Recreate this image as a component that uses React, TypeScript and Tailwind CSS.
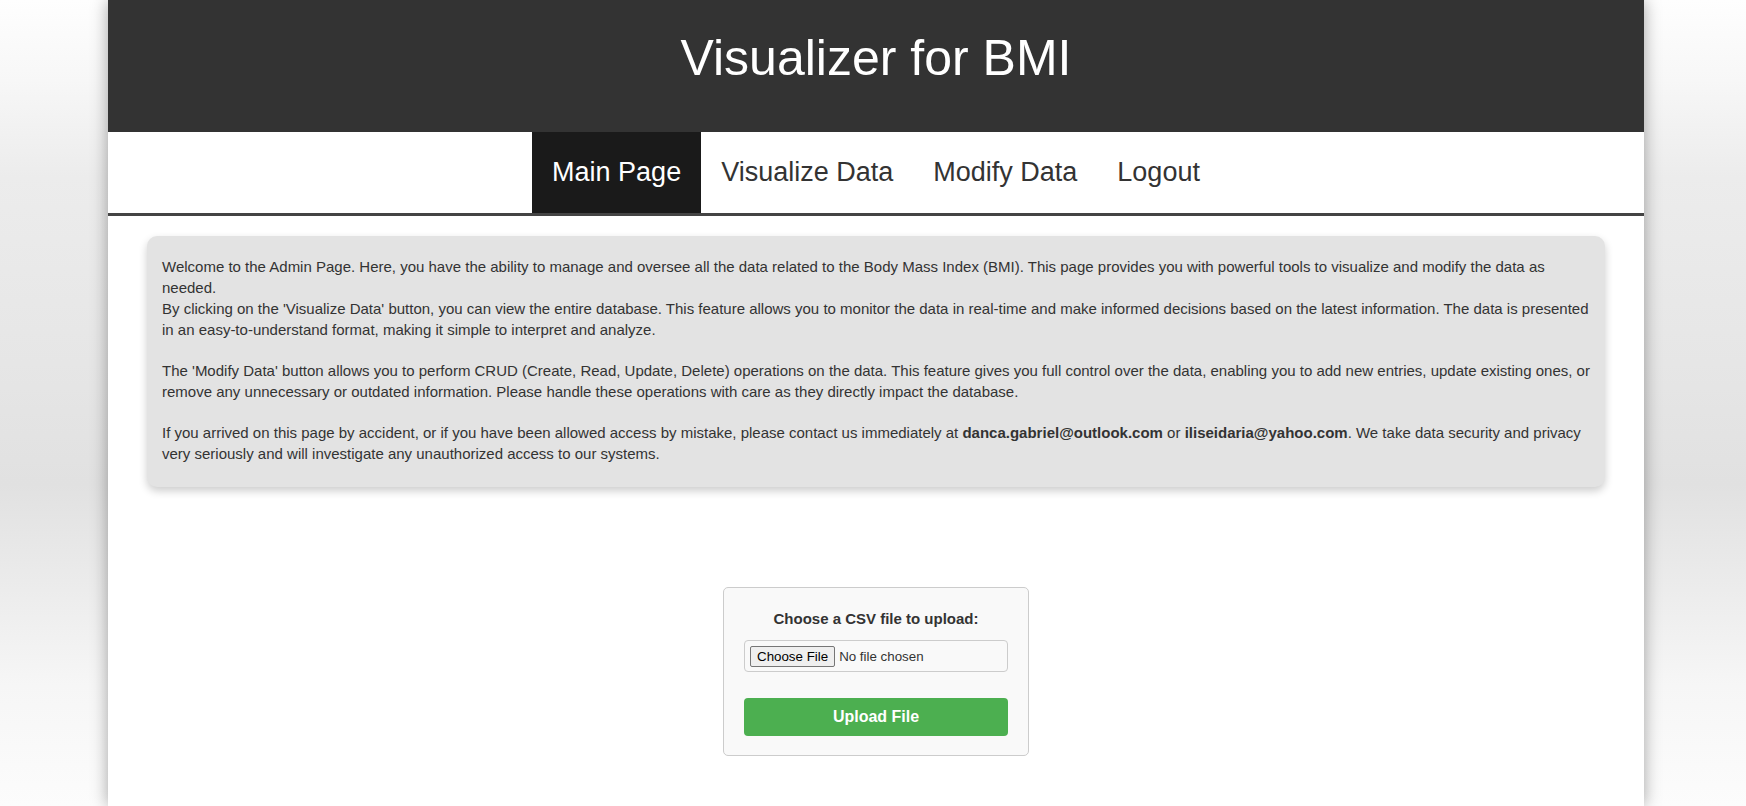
export default function App() {
  const navItems = ['Main Page', 'Visualize Data', 'Modify Data', 'Logout'];

  return (
    <div className="min-h-screen w-full overflow-hidden bg-[linear-gradient(180deg,#fefefe_0%,#f7f7f7_10%,#ececec_22%,#e6e6e6_45%,#e1e1e1_60%,#ebebeb_72%,#f6f6f6_85%,#fcfcfc_100%)] font-['Liberation_Sans',Arial,sans-serif]">
      <div className="ml-[108px] w-[1536px] min-h-[806px] bg-white shadow-[0_0_16px_rgba(0,0,0,0.35)]">
        {/* Header */}
        <div className="h-[132px] bg-[#333333] pt-[33px] text-center">
          <h1 className="text-[50px] leading-none font-normal text-white">Visualizer for BMI</h1>
        </div>

        {/* Navigation */}
        <nav className="flex h-[84px] justify-center border-b-[3px] border-[#444444]">
          {navItems.map((item, i) => (
            <a
              key={item}
              href="#"
              className={
                i === 0
                  ? 'flex h-[81px] items-center bg-[#1a1a1a] px-[20px] text-[27px] text-white'
                  : 'flex h-[81px] items-center px-[20px] text-[27px] text-[#333333]'
              }
            >
              {item}
            </a>
          ))}
        </nav>

        {/* Intro */}
        <div className="mx-[39px] mt-[20px] rounded-[10px] bg-[#e3e3e3] px-[15px] pt-[20px] pb-[23px] text-[15px] leading-[21px] text-[#333333] shadow-[0_4px_8px_rgba(0,0,0,0.2)]">
          <p className="mb-[20px]">
            Welcome to the Admin Page. Here, you have the ability to manage and oversee all the data related to the Body Mass Index (BMI). This page provides you with powerful tools to visualize and modify the data as needed.
            <br />
            By clicking on the 'Visualize Data' button, you can view the entire database. This feature allows you to monitor the data in real-time and make informed decisions based on the latest information. The data is presented in an easy-to-understand format, making it simple to interpret and analyze.
          </p>
          <p className="mb-[20px]">
            The 'Modify Data' button allows you to perform CRUD (Create, Read, Update, Delete) operations on the data. This feature gives you full control over the data, enabling you to add new entries, update existing ones, or remove any unnecessary or outdated information. Please handle these operations with care as they directly impact the database.
          </p>
          <p>
            If you arrived on this page by accident, or if you have been allowed access by mistake, please contact us immediately at{' '}
            <strong>danca.gabriel@outlook.com</strong> or <strong>iliseidaria@yahoo.com</strong>. We take data security and privacy very seriously and will investigate any unauthorized access to our systems.
          </p>
        </div>

        {/* Upload */}
        <div className="mt-[100px] flex justify-center">
          <form className="w-[306px] rounded-[5px] border border-[#cccccc] bg-[#f9f9f9] px-[20px] pt-[21px] pb-[19px]">
            <label className="mb-[11px] block text-center text-[15px] leading-[20px] font-bold text-[#333333]">
              Choose a CSV file to upload:
            </label>
            <div className="flex h-[32px] items-center rounded-[4px] border border-[#cccccc] bg-[#f9f9f9] px-[5px]">
              <input
                type="file"
                accept=".csv"
                className="w-full text-[13.33px] text-[#333333] file:mr-[4px] file:h-[21px] file:rounded-[2px] file:border file:border-[#767676] file:bg-[#efefef] file:px-[6px] file:text-[13.33px] file:text-black"
              />
            </div>
            <button
              type="button"
              className="mt-[26px] h-[38px] w-full rounded-[4px] bg-[#4caf50] text-[16px] font-bold text-white"
            >
              Upload File
            </button>
          </form>
        </div>
      </div>
    </div>
  );
}
